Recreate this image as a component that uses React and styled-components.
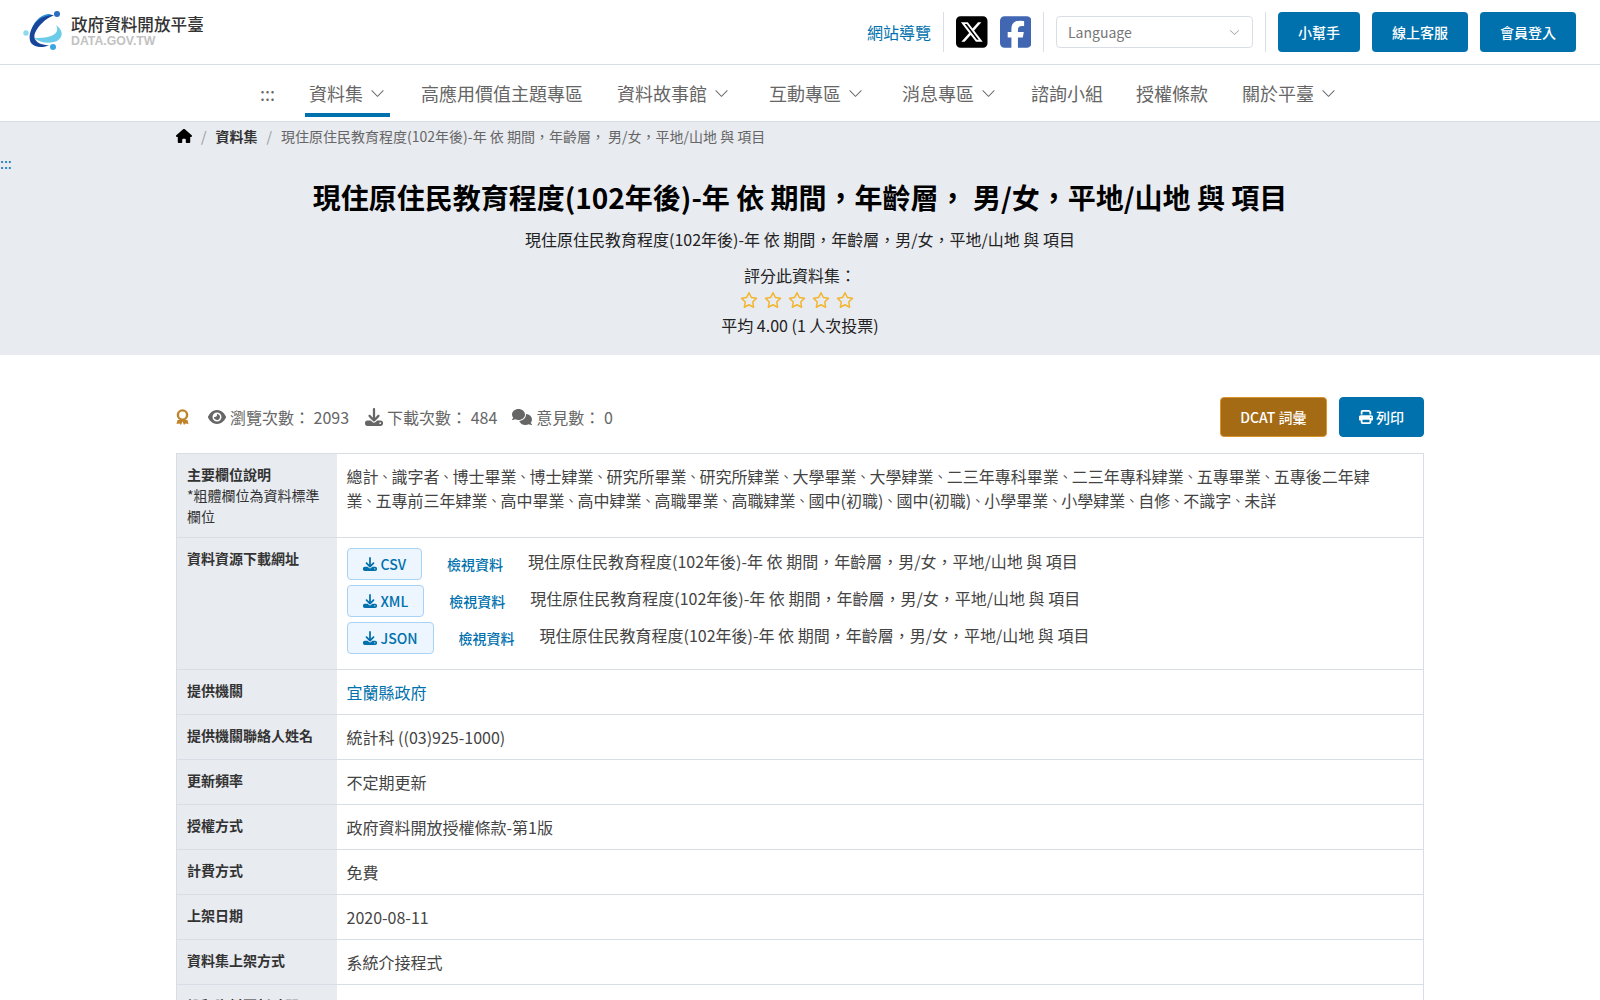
import React from 'react';
import styled, { createGlobalStyle } from 'styled-components';
import { BsChevronDown } from 'react-icons/bs';
import { FaSquareXTwitter, FaSquareFacebook, FaEye, FaDownload, FaComments, FaPrint, FaHouse, FaRegStar } from 'react-icons/fa6';

const BLUE = '#0071ad';
const LINE = '#d9dde6';

const GlobalStyle = createGlobalStyle`
	html, body {
		margin: 0;
		padding: 0;
		height: 1000px;
		overflow: hidden;
		background: #fff;
	}
	body {
		font-family: "Noto Sans CJK TC", "Noto Sans", sans-serif;
		font-size: 16px;
		color: #333;
	}
	* {
		box-sizing: border-box;
	}
`;

const TopBar = styled.header`
	height: 65px;
	display: flex;
	align-items: center;
	justify-content: space-between;
	padding: 0 24px 0 20px;
	border-bottom: 1px solid ${LINE};
`;

const Brand = styled.a`
	display: flex;
	align-items: center;
	gap: 1px;
`;

const BrandText = styled.div`
	display: flex;
	flex-direction: column;
	margin-top: -3px;
`;

const BrandName = styled.span`
	font-size: 16.6px;
	font-weight: 500;
	line-height: 20px;
	color: #333;
`;

const BrandSub = styled.span`
	font-family: "Liberation Sans", sans-serif;
	font-size: 12.3px;
	font-weight: 700;
	line-height: 14px;
	color: #c2c2c2;
`;

const TopTools = styled.div`
	display: flex;
	align-items: center;
	height: 40px;
`;

const ToolLink = styled.a`
	color: ${BLUE};
	font-size: 16px;
	padding-right: 12px;
`;

const ToolCell = styled.div`
	display: flex;
	align-items: center;
	gap: 12px;
	height: 40px;
	padding: 0 12px;
	border-left: 1px solid ${LINE};
`;

const XIcon = styled(FaSquareXTwitter)`
	width: 31.5px;
	height: 36px;
	color: #000;
`;

const FacebookIcon = styled(FaSquareFacebook)`
	width: 31.5px;
	height: 36px;
	color: #4267b2;
`;

const SelectBox = styled.div`
	width: 197px;
	height: 32px;
	display: flex;
	align-items: center;
	justify-content: space-between;
	padding: 0 12px 0 11px;
	border: 1px solid ${LINE};
	border-radius: 4px;
	font-size: 14px;
	color: #777;
`;

const TopButton = styled.a`
	height: 40px;
	display: flex;
	align-items: center;
	padding: 0 20px;
	border-radius: 4px;
	background: ${BLUE};
	color: #fff;
	font-size: 14px;
	font-weight: 500;
`;

const ButtonGroup = styled.div`
	display: flex;
	gap: 12px;
	padding-left: 12px;
	border-left: 1px solid ${LINE};
	height: 40px;
`;

const Nav = styled.nav`
	height: 57px;
	display: flex;
	justify-content: center;
	gap: 26px;
	padding-right: 1px;
	border-bottom: 1px solid ${LINE};
`;

const NavItem = styled.a`
	height: 52px;
	display: flex;
	align-items: center;
	gap: 7px;
	padding: 8px ${(p) => p.$pad}px 0 4px;
	margin-right: ${(p) => (p.$active ? 1 : 0)}px;
	font-size: 18px;
	color: #666;
	border-bottom: 4px solid ${(p) => (p.$active ? BLUE : 'transparent')};
`;

const Hero = styled.section`
	background: #e8ebf0;
	height: 233px;
	text-align: center;
`;

const Crumbs = styled.ol`
	display: flex;
	align-items: center;
	list-style: none;
	margin: 0;
	padding: 3px 0 0 176px;
	height: 24px;
	font-size: 14px;
	color: #666;
`;

const Crumb = styled.li`
	display: flex;
	align-items: center;
	font-weight: ${(p) => (p.$bold ? 700 : 400)};
	color: ${(p) => (p.$bold ? '#333' : 'inherit')};
	white-space: pre;

	&:not(:first-child)::before {
		content: '/';
		color: #999;
		padding: 0 9px;
		font-weight: 400;
	}
`;

const SkipLink = styled.a`
	display: block;
	text-align: left;
	color: ${BLUE};
	font-size: 14px;
	line-height: 20px;
	margin-top: 7px;
`;

const Title = styled.h2`
	margin: 3px 0 0;
	font-size: 28px;
	font-weight: 700;
	line-height: 42px;
	color: #000;
`;

const HeroLine = styled.p`
	margin: ${(p) => p.$top}px 0 0;
	line-height: 24px;
	color: #222;
`;

const Stars = styled.div`
	display: flex;
	justify-content: center;
	gap: 6px;
	margin-top: 4px;
	padding-right: 6px;
	height: 18px;
	align-items: center;
	color: #f2b632;
	font-size: 18px;
`;

const Main = styled.main`
	padding: 42px 176px 0;
`;

const StatsRow = styled.div`
	display: flex;
	align-items: center;
	justify-content: space-between;
	height: 40px;
	margin-bottom: 16px;
`;

const Stats = styled.div`
	display: flex;
	align-items: center;
	color: #666;
`;

const Stat = styled.span`
	display: flex;
	align-items: center;
	gap: 4px;
	margin-left: ${(p) => p.$left}px;
	white-space: pre;

	svg {
		font-size: ${(p) => p.$icon || 18}px;
	}
`;

const Actions = styled.div`
	display: flex;
	gap: 12px;
`;

const ActionButton = styled.a`
	height: 40px;
	display: flex;
	align-items: center;
	gap: 3px;
	padding: 0 ${(p) => (p.$gold ? 19.5 : 19)}px;
	border-radius: 4px;
	font-size: 14px;
	font-weight: 500;
	color: #fff;
	background: ${(p) => (p.$gold ? '#a56a14' : BLUE)};
	border: 1px solid ${(p) => (p.$gold ? '#d9932e' : BLUE)};
`;

const InfoTable = styled.table`
	width: 100%;
	border-collapse: collapse;
	border: 1px solid ${LINE};
	table-layout: fixed;
`;

const Row = styled.tr`
	border-bottom: 1px solid ${LINE};
`;

const Head = styled.th`
	width: 160px;
	padding: 10px;
	vertical-align: top;
	text-align: left;
	background: #e8ebf0;
	font-size: 14px;
	font-weight: 700;
	line-height: 21px;
	color: #333;
`;

const HeadNote = styled.span`
	display: block;
	font-weight: 400;
`;

const Cell = styled.td`
	padding: 10px;
	vertical-align: top;
	line-height: 24px;
	color: #444;
`;

const FieldLine = styled.div`
	display: flex;
	white-space: nowrap;
`;

const Comma = styled.span`
	width: 13px;
	font-size: 13px;
`;

const Resource = styled.div`
	display: flex;
	align-items: center;
	margin-bottom: 5px;
`;

const FileButton = styled.a`
	height: 32px;
	display: flex;
	align-items: center;
	gap: 4px;
	padding: 0 15px;
	border: 1px solid #a8d3f5;
	border-radius: 4px;
	background: #edf5fe;
	color: ${BLUE};
	font-size: 14px;
	font-weight: 500;
`;

const ViewLink = styled.a`
	margin: -1px 25px 0;
	color: ${BLUE};
	font-size: 14px;
	font-weight: 500;
`;

const ResourceName = styled.span`
	margin-top: -7px;
`;

const OrgLink = styled.a`
	color: ${BLUE};
`;

const Logo = () => (
	<svg width="50" height="48" viewBox="0 0 50 48">
		<path d="M11 25c1-10 9-18 17-19 2 0 4 .5 5 2-8 0-14 5-18 11-2 2-3 4-4 6z" fill="#2b8fd6" />
		<path d="M34 7C25 11 18 18 15 25c-2 5 1 9 6 11 3 1 6 1.500 9 1-7 3-15 3-19-2-3-6-1-14 5-21 5-5 11-7 18-7z" fill="#17459a" />
		<path d="M14 30C20 35 30 36 37 33 43 29 44 23 36 17 39 23 36 26 31 28 25 30 19 30 14 30z" fill="#6ccbe8" />
		<circle cx="37" cy="6" r="3" fill="#2d6cc0" />
		<circle cx="6" cy="25" r="2.700" fill="#8fd8f0" />
		<circle cx="33" cy="39" r="3" fill="#3ba6e0" />
	</svg>
);

const Award = () => (
	<svg width="13" height="17" viewBox="0 0 13 17" fill="none">
		<circle cx="6.500" cy="6" r="4.600" stroke="#c0832a" strokeWidth="2.400" />
		<path d="M1.500 11l-1 4 3-.6 1.500 1.600 1.500-3.500 1.500 3.500 1.500-1.600 3 .6-1-4z" fill="#c0832a" />
	</svg>
);

const pageTitle = '現住原住民教育程度(102年後)-年 依 期間\uFF0C年齡層\uFF0C 男/女\uFF0C平地/山地 與 項目';
const resourceTitle = '現住原住民教育程度(102年後)-年 依 期間\uFF0C年齡層\uFF0C男/女\uFF0C平地/山地 與 項目';

const fieldLines = [
	['總計', '識字者', '博士畢業', '博士肄業', '研究所畢業', '研究所肄業', '大學畢業', '大學肄業', '二三年專科畢業', '二三年專科肄業', '五專畢業', '五專後二年肄'],
	['業', '五專前三年肄業', '高中畢業', '高中肄業', '高職畢業', '高職肄業', '國中(初職)', '國中(初職)', '小學畢業', '小學肄業', '自修', '不識字', '未詳'],
];

const navItems = [
	{ label: '資料集', menu: true, active: true, pad: 5 },
	{ label: '高應用價值主題專區', pad: 4 },
	{ label: '資料故事館', menu: true, pad: 10 },
	{ label: '互動專區', menu: true, pad: 9 },
	{ label: '消息專區', menu: true, pad: 5 },
	{ label: '諮詢小組', pad: 3 },
	{ label: '授權條款', pad: 4 },
	{ label: '關於平臺', menu: true, pad: 7 },
];

const plainRows = [
	['提供機關聯絡人姓名', '統計科 ((03)925-1000)'],
	['更新頻率', '不定期更新'],
	['授權方式', '政府資料開放授權條款-第1版'],
	['計費方式', '免費'],
	['上架日期', '2020-08-11'],
	['資料集上架方式', '系統介接程式'],
	['詮釋資料更新時間', '2024-01-01 00:00:00'],
];

const App = () => {
	return (
		<>
			<GlobalStyle />
			<TopBar>
				<Brand>
					<Logo />
					<BrandText>
						<BrandName>政府資料開放平臺</BrandName>
						<BrandSub>DATA.GOV.TW</BrandSub>
					</BrandText>
				</Brand>
				<TopTools>
					<ToolLink>網站導覽</ToolLink>
					<ToolCell>
						<XIcon />
						<FacebookIcon />
					</ToolCell>
					<ToolCell>
						<SelectBox>
							Language
							<BsChevronDown size={11} color="#999" />
						</SelectBox>
					</ToolCell>
					<ButtonGroup>
						<TopButton>小幫手</TopButton>
						<TopButton>線上客服</TopButton>
						<TopButton>會員登入</TopButton>
					</ButtonGroup>
				</TopTools>
			</TopBar>
			<Nav>
				<NavItem $pad={4}>:::</NavItem>
				{navItems.map((item) => (
					<NavItem key={item.label} $active={item.active} $pad={item.pad}>
						{item.label}
						{item.menu && <BsChevronDown size={15} />}
					</NavItem>
				))}
			</Nav>
			<Hero>
				<Crumbs>
					<Crumb>
						<FaHouse size={16} color="#000" />
					</Crumb>
					<Crumb $bold>資料集</Crumb>
					<Crumb>{pageTitle}</Crumb>
				</Crumbs>
				<SkipLink>:::</SkipLink>
				<Title>{pageTitle}</Title>
				<HeroLine $top={9}>{resourceTitle}</HeroLine>
				<HeroLine $top={12}>{'評分此資料集\uFF1A'}</HeroLine>
				<Stars>
					<FaRegStar />
					<FaRegStar />
					<FaRegStar />
					<FaRegStar />
					<FaRegStar />
				</Stars>
				<HeroLine $top={4}>平均 4.00 (1 人次投票)</HeroLine>
			</Hero>
			<Main>
				<StatsRow>
					<Stats>
						<Award />
						<Stat $left={19}>
							<FaEye />
							{'瀏覽次數\uFF1A 2093'}
						</Stat>
						<Stat $left={16}>
							<FaDownload />
							{'下載次數\uFF1A 484'}
						</Stat>
						<Stat $left={15} $icon={20}>
							<FaComments />
							{'意見數\uFF1A 0'}
						</Stat>
					</Stats>
					<Actions>
						<ActionButton $gold>DCAT 詞彙</ActionButton>
						<ActionButton>
							<FaPrint />
							列印
						</ActionButton>
					</Actions>
				</StatsRow>
				<InfoTable>
					<tbody>
						<Row>
							<Head>
								主要欄位說明
								<HeadNote>*粗體欄位為資料標準欄位</HeadNote>
							</Head>
							<Cell>
								{fieldLines.map((line) => (
									<FieldLine key={line[0]}>
										{line.map((term, i) => (
											<React.Fragment key={i}>
												<span>{term}</span>
												{i < line.length - 1 && <Comma>、</Comma>}
											</React.Fragment>
										))}
									</FieldLine>
								))}
							</Cell>
						</Row>
						<Row>
							<Head>資料資源下載網址</Head>
							<Cell>
								{['CSV', 'XML', 'JSON'].map((type) => (
									<Resource key={type}>
										<FileButton>
											<FaDownload />
											{type}
										</FileButton>
										<ViewLink>檢視資料</ViewLink>
										<ResourceName>{resourceTitle}</ResourceName>
									</Resource>
								))}
							</Cell>
						</Row>
						<Row>
							<Head>提供機關</Head>
							<Cell>
								<OrgLink>宜蘭縣政府</OrgLink>
							</Cell>
						</Row>
						{plainRows.map(([head, value]) => (
							<Row key={head}>
								<Head>{head}</Head>
								<Cell>{value}</Cell>
							</Row>
						))}
					</tbody>
				</InfoTable>
			</Main>
		</>
	);
};

export default App;
